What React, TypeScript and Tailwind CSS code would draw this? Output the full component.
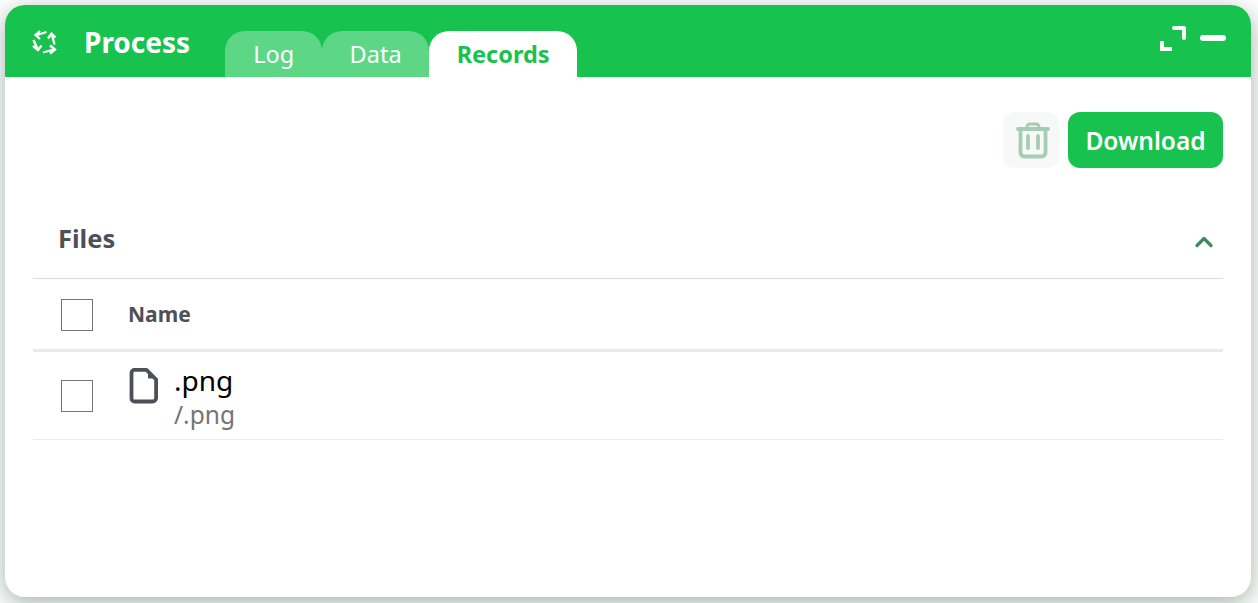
import { ChevronUp } from "lucide-react";

const ProcessIcon = () => (
  <svg width="34" height="34" viewBox="0 0 34 34" fill="none" stroke="white" strokeWidth="2.3">
    <path d="M18.5 6 L9 9" />
    <path d="M12 5 L7.5 9 L12 13" />
    <path d="M26.5 18.5 L24 9" />
    <path d="M20 12.5 L23.5 7.5 L27.5 11.5" />
    <path d="M5.5 14 L9.5 23" />
    <path d="M5 20 L10 24 L13.5 19.5" />
    <path d="M15 26.5 L26 23.5" />
    <path d="M22 19.5 L27 23.5 L22 27.5" />
  </svg>
);

const ExpandIcon = () => (
  <svg width="26" height="26" viewBox="0 0 26 26" fill="none" stroke="white" strokeWidth="4">
    <path d="M2 15 V23 H12" />
    <path d="M14 2 H24 V12" strokeLinejoin="round" strokeLinecap="round" />
  </svg>
);

const TrashIcon = () => (
  <svg width="52" height="50" viewBox="0 0 52 50" fill="none" stroke="#a6ccb4" strokeWidth="3.8" strokeLinecap="round" strokeLinejoin="round">
    <path d="M13 14 H43" />
    <path d="M22 13 V12 a3 3 0 0 1 3 -3 H31 a3 3 0 0 1 3 3 V13" strokeWidth="3" />
    <path d="M15.5 14 V37.5 a4 4 0 0 0 4 4 H36.5 a4 4 0 0 0 4 -4 V14" />
    <path d="M23 21 V33" />
    <path d="M33 21 V33" />
  </svg>
);

const FileIcon = () => (
  <svg width="40" height="44" viewBox="0 0 40 44" fill="none" stroke="#4f4f58" strokeWidth="3.8" strokeLinejoin="round">
    <path d="M9.5 6.9 H21.5 L31.1 16.5 V35 a3.5 3.5 0 0 1 -3.5 3.5 H9.5 a3 3 0 0 1 -3 -3 V9.9 a3 3 0 0 1 3 -3 Z" />
    <path d="M23.5 9.5 V15 H29 Z" fill="#4f4f58" strokeWidth="1" />
  </svg>
);

const Checkbox = () => <span className="block h-8 w-8 border border-[#757575] bg-white" />;

export default function App() {
  return (
    <div className="h-[603px] w-[1258px] overflow-hidden bg-white p-[5px] font-['Noto_Sans',sans-serif]">
      <div className="flex h-[592px] w-[1246px] flex-col overflow-hidden rounded-[20px] bg-white shadow-[0_6px_24px_rgba(20,60,35,0.4)]">
        {/* Header */}
        <header className="flex h-[72px] shrink-0 items-stretch bg-[#17c24e] pl-[23px] pr-[25px]">
          <div className="flex h-[72px] items-start pt-[21px]">
            <ProcessIcon />
          </div>
          <h1 className="ml-[22px] h-[72px] pt-[17px] text-[28px] leading-[40px] font-bold text-white">Process</h1>
          <div className="ml-[35px] flex items-end">
            <div className="flex h-[46px] w-[97px] items-center justify-center rounded-t-[20px] bg-[#5dd785] pt-[2px] text-[23.5px] text-white">Log</div>
            <div className="flex h-[46px] w-[107px] items-center justify-center rounded-t-[20px] bg-[#5dd785] pt-[2px] text-[23.5px] text-white">Data</div>
            <div className="flex h-[46px] w-[148px] items-center justify-center rounded-t-[20px] bg-white pt-[2px] text-[23.5px] font-bold text-[#17c24e]">Records</div>
          </div>
          <div className="ml-auto flex items-start gap-[14px] pt-[21px]">
            <ExpandIcon />
            <span className="mt-[9px] block h-[6px] w-[26px] rounded-full bg-white" />
          </div>
        </header>

        {/* Content */}
        <main className="flex-1 px-[28px] pt-[35px]">
          <div className="flex justify-end gap-[9px]">
            <button className="flex h-14 w-14 items-center justify-center rounded-[12px] bg-[#f7f9f8]">
              <TrashIcon />
            </button>
            <button className="h-14 w-[155px] rounded-[12px] bg-[#17c24e] pt-[2px] text-[24.5px] font-semibold text-white">Download</button>
          </div>

          <div className="mt-[35px] flex h-[76px] items-center justify-between border-b border-[#dcdcdc] pr-[5px] pl-[25px]">
            <span className="pb-[5px] text-[25.5px] font-bold text-[#4f4f58]">Files</span>
            <ChevronUp size={28} strokeWidth={2.8} color="#3f8a5a" className="mt-[3px]" />
          </div>

          <div className="flex h-[73px] items-center border-b-[3px] border-[#ebebeb] pt-[2px] pl-[28px]">
            <Checkbox />
            <span className="ml-[35px] text-[21px] font-bold text-[#4f4f58]">Name</span>
          </div>

          <div className="flex h-[88px] items-center border-b border-[#ebebeb] pl-[28px]">
            <Checkbox />
            <div className="ml-[32px] mb-[21px] flex">
              <FileIcon />
            </div>
            <div className="ml-[9px] flex flex-col pt-[2px]">
              <span className="text-[28px] leading-[34px] text-black">.png</span>
              <span className="mt-[2px] text-[24.5px] leading-[32px] text-[#757575]">/.png</span>
            </div>
          </div>
        </main>
      </div>
    </div>
  );
}
